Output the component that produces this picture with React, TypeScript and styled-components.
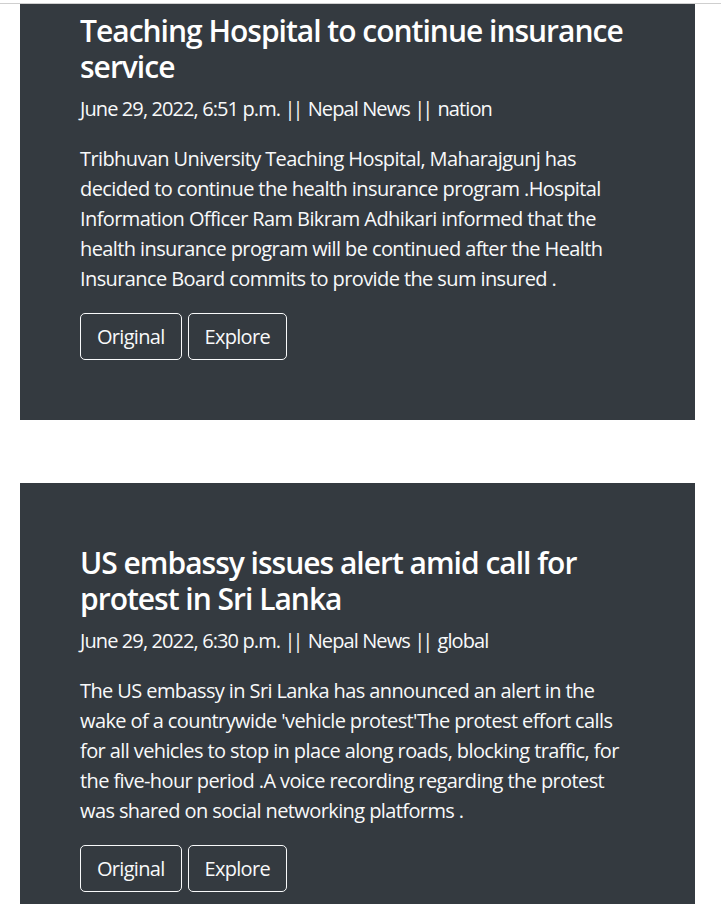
import * as React from 'react';
import styled, { createGlobalStyle } from 'styled-components';

interface Article {
  title: string;
  date: string;
  source: string;
  category: string;
  summary: string;
}

const articles: Article[] = [
  {
    title: 'Teaching Hospital to continue insurance service',
    date: 'June 29, 2022, 6:51 p.m.',
    source: 'Nepal News',
    category: 'nation',
    summary:
      'Tribhuvan University Teaching Hospital, Maharajgunj has decided to continue the health insurance program .Hospital Information Officer Ram Bikram Adhikari informed that the health insurance program will be continued after the Health Insurance Board commits to provide the sum insured .',
  },
  {
    title: 'US embassy issues alert amid call for protest in Sri Lanka',
    date: 'June 29, 2022, 6:30 p.m.',
    source: 'Nepal News',
    category: 'global',
    summary:
      "The US embassy in Sri Lanka has announced an alert in the wake of a countrywide 'vehicle protest'The protest effort calls for all vehicles to stop in place along roads, blocking traffic, for the five-hour period .A voice recording regarding the protest was shared on social networking platforms .",
  },
];

const GlobalStyle = createGlobalStyle`
  body {
    margin: 0;
    background: #fff;
    font-family: "Open Sans", "Noto Sans", sans-serif;
    color: #f8f9fa;
  }
`;

const TopBar = styled.div`
  height: 3px;
  border-bottom: 1px solid #cfcfcf;
`;

const Feed = styled.div`
  display: flex;
  flex-direction: column;
  gap: 63px;
  padding: 0 26px 0 20px;
`;

const Card = styled.section<{ $scrolled?: boolean }>`
  background: #343a40;
  padding: ${p => (p.$scrolled ? '9px' : '62px')} 60px 60px;
`;

const Title = styled.h2`
  margin: 0 0 9px;
  font-size: 30px;
  line-height: 36px;
  font-weight: 600;
  letter-spacing: -1px;
  color: #fff;
`;

const Meta = styled.p`
  margin: 0 0 20px;
  font-size: 20px;
  line-height: 30px;
  letter-spacing: -0.9px;
`;

const Bars = styled.span`
  letter-spacing: -3px;
  margin-right: 3px;
`;

const Summary = styled.p`
  margin: 0 0 19px;
  font-size: 20px;
  line-height: 30px;
  letter-spacing: -0.6px;
`;

const Actions = styled.div`
  display: flex;
  gap: 6px;
`;

const OutlineButton = styled.button`
  background: transparent;
  color: #f8f9fa;
  border: 1px solid #f8f9fa;
  border-radius: 5px;
  padding: 8px 16px;
  font-family: inherit;
  font-size: 20px;
  line-height: 29px;
  letter-spacing: -0.7px;
  cursor: pointer;
`;

export default function App() {
  return (
    <>
      <GlobalStyle />
      <TopBar />
      <Feed>
        {articles.map((a, i) => (
          <Card key={a.title} $scrolled={i === 0}>
            <Title>{a.title}</Title>
            <Meta>
              {a.date} <Bars>||</Bars> {a.source} <Bars>||</Bars> {a.category}
            </Meta>
            <Summary>{a.summary}</Summary>
            <Actions>
              <OutlineButton>Original</OutlineButton>
              <OutlineButton>Explore</OutlineButton>
            </Actions>
          </Card>
        ))}
      </Feed>
    </>
  );
}
